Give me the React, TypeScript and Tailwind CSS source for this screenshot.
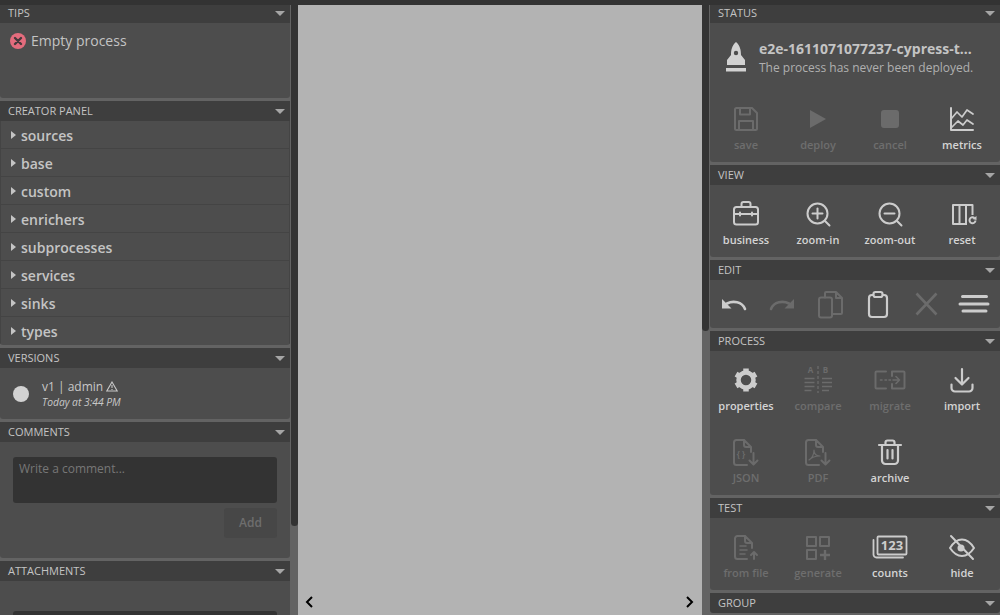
import React from "react";

const ON = "#cccccc";
const OFF = "#6b6b6b";

function Caret() {
  return (
    <svg width="10" height="5" viewBox="0 0 10 5" className="shrink-0">
      <polygon points="0,0 10,0 5,5" fill="#a6a6a6" />
    </svg>
  );
}

function Panel({ title, children }: { title: string; children?: React.ReactNode }) {
  return (
    <section className="mb-[3px] overflow-hidden rounded-b-[3px] bg-[#4d4d4d]">
      <header className="flex h-5 items-center justify-between bg-[#3e3e3e] pl-2 pr-[5px] text-[11px] uppercase leading-5 text-[#c4c4c4]">
        <span>{title}</span>
        <Caret />
      </header>
      {children}
    </section>
  );
}

function Glyph({ color, children }: { color: string; children: React.ReactNode }) {
  return (
    <svg
      width="32"
      height="32"
      viewBox="0 0 32 32"
      fill="none"
      stroke={color}
      strokeWidth="2"
      strokeLinecap="round"
      strokeLinejoin="round"
      className="shrink-0 overflow-visible"
    >
      {children}
    </svg>
  );
}

function Tool({ label, on, children }: { label: string; on?: boolean; children: (c: string) => React.ReactNode }) {
  const color = on ? ON : OFF;
  return (
    <div className="flex h-[72px] w-[72px] flex-col items-center pt-[13px]">
      <Glyph color={color}>{children(color)}</Glyph>
      <span className={`mt-[2px] text-[11px] font-semibold leading-4 ${on ? "text-[#d4d4d4]" : "text-[#6e6e6e]"}`}>{label}</span>
    </div>
  );
}

function EditTool({ on, children }: { on?: boolean; children: (c: string) => React.ReactNode }) {
  return (
    <div className="flex h-12 w-12 items-center justify-center">
      <Glyph color={on ? ON : OFF}>{children(on ? ON : OFF)}</Glyph>
    </div>
  );
}

const Undo = (c: string) => (
  <>
    <path d="M9 15.500C15 12.500 24 13.500 27 21" strokeWidth="2.600" />
    <polygon points="4,11 4,20.500 13.500,20.500" fill={c} stroke="none" />
  </>
);

const Zoom = (minusOnly: boolean) => (
  <>
    <circle cx="15.500" cy="15.500" r="10" />
    <path d="M23 23l4.500 4.500M10.500 15.500h10" />
    {!minusOnly && <path d="M15.500 10.500v10" />}
  </>
);

const Doc = () => (
  <>
    <path d="M14 4H6.500A2.500 2.500 0 0 0 4 6.500v20A2.500 2.500 0 0 0 6.500 29H17" />
    <path d="M14 4l7 7v5M14 4v5a2 2 0 0 0 2 2h5" />
  </>
);

const DownArrow = () => <path d="M23.500 17v11M19.500 24.500l4 4 4-4" />;

const categories = ["sources", "base", "custom", "enrichers", "subprocesses", "services", "sinks", "types"];

export default function App() {
  return (
    <div className="flex h-[615px] w-[1000px] flex-col overflow-hidden bg-[#333333] font-['Open_Sans',sans-serif]">
      <div className="h-[5px] shrink-0 bg-[#333333]" />
      <div className="flex min-h-0 flex-1">
        {/* left column */}
        <aside className="flex w-[298px] shrink-0 bg-[#636363]">
          <div className="w-[290px] shrink-0 overflow-hidden">
            <div className="-mt-[2px]">
              <Panel title="Tips">
                <div className="flex h-[75px] items-start pl-[10px] pt-[8px]">
                  <svg width="16" height="16" viewBox="0 0 16 16" className="mt-[2px] shrink-0">
                    <circle cx="8" cy="8" r="8" fill="#e46c7d" />
                    <path d="M5 5l6 6M11 5l-6 6" stroke="#45393c" strokeWidth="2.400" strokeLinecap="round" />
                  </svg>
                  <span className="ml-[5px] text-sm leading-5 text-[#c4c4c4]">Empty process</span>
                </div>
              </Panel>
              <Panel title="Creator panel">
                <div className="bg-[#444444] px-px">
                  {categories.map((c) => (
                    <div key={c} className="mb-px flex h-[27px] items-center bg-[#4d4d4d] pl-[10px] pt-[3px]">
                      <svg width="5" height="8" viewBox="0 0 5 8" className="-mt-[3px] shrink-0">
                        <polygon points="0,0 5,4 0,8" fill="#c4c4c4" />
                      </svg>
                      <span className="ml-[5px] text-sm font-semibold leading-6 text-[#c4c4c4]">{c}</span>
                    </div>
                  ))}
                </div>
              </Panel>
              <Panel title="Versions">
                <div className="flex h-[51px] items-center pl-[13px]">
                  <span className="h-4 w-4 shrink-0 rounded-full bg-[#d2d2d2]" />
                  <div className="ml-[13px] flex flex-col">
                    <div className="flex items-center text-xs leading-[16px] text-[#c8c8c8]">
                      <span>v1 | admin</span>
                      <svg width="12" height="11" viewBox="0 0 12 11" fill="none" stroke="#c8c8c8" strokeWidth="1.100" className="ml-[3px]">
                        <path d="M6 1L11.200 10H.8z" />
                        <path d="M6 4v3M6 8v1" />
                      </svg>
                    </div>
                    <span className="text-[10.3px] italic leading-[14px] text-[#c8c8c8]">Today at 3:44 PM</span>
                  </div>
                </div>
              </Panel>
              <Panel title="Comments">
                <div className="flex h-[116px] flex-col px-[13px] pt-[15px]">
                  <textarea
                    readOnly
                    placeholder="Write a comment..."
                    className="h-[46px] w-full resize-none rounded-[3px] bg-[#333333] px-[6px] py-[3px] text-xs leading-[18px] outline-none placeholder:text-[#777777]"
                  />
                  <div className="mt-[5px] flex h-[30px] w-[53px] items-center justify-center self-end rounded-[3px] bg-[#474747] text-xs font-semibold text-[#6e6e6e]">
                    Add
                  </div>
                </div>
              </Panel>
              <Panel title="Attachments">
                <div className="px-[13px] pt-[30px]">
                  <div className="h-[46px] rounded-[3px] bg-[#333333]" />
                </div>
              </Panel>
            </div>
          </div>
          <div className="w-2 shrink-0 pl-px">
            <div className="h-[521px] rounded-b-[4px] bg-[#333333]" />
          </div>
        </aside>

        {/* canvas */}
        <main className="flex flex-1 items-end justify-between bg-[#b3b3b3] pb-[7px] pl-[7px] pr-[8px]">
          <svg width="8" height="12" viewBox="0 0 8 12" fill="none" stroke="#000" strokeWidth="2">
            <path d="M7 1L2 6l5 5" />
          </svg>
          <svg width="8" height="12" viewBox="0 0 8 12" fill="none" stroke="#000" strokeWidth="2">
            <path d="M1 1l5 5-5 5" />
          </svg>
        </main>

        {/* right column */}
        <aside className="flex w-[298px] shrink-0 bg-[#636363]">
          <div className="w-2 shrink-0 pr-px">
            <div className="h-[326px] rounded-b-[4px] bg-[#333333]" />
          </div>
          <div className="w-[290px] shrink-0 overflow-hidden">
            <div className="-mt-[2px]">
              <Panel title="Status">
                <div className="flex h-[67px] items-center pl-[10px]">
                  <svg width="32" height="36" viewBox="0 0 32 36" className="-mt-[2px] shrink-0">
                    <path d="M16 4C12 7.500 11 12 11 17L7 22V27H25V22L21 17C21 12 20 7.500 16 4Z" fill="#d2d2d2" />
                    <rect x="6" y="30" width="20" height="3.500" fill="#d2d2d2" />
                    <circle cx="16" cy="15" r="2.200" fill="#4d4d4d" />
                  </svg>
                  <div className="ml-[7px] flex flex-col pt-[3px]">
                    <span className="text-sm font-bold leading-[18px] text-[#c4c4c4]">e2e-1611071077237-cypress-t...</span>
                    <span className="mt-[1px] text-xs leading-[18px] text-[#b0b0b0]">The process has never been deployed.</span>
                  </div>
                </div>
                <div className="flex">
                  <Tool label="save">
                    {() => (
                      <>
                        <path d="M5 6.500A1.500 1.500 0 0 1 6.500 5H22l5 5v15.500a1.500 1.500 0 0 1-1.500 1.500h-19A1.500 1.500 0 0 1 5 25.500z" />
                        <path d="M10 5v6.500h10V5M9 27v-9h14v9" />
                      </>
                    )}
                  </Tool>
                  <Tool label="deploy">{(c) => <polygon points="8,7 24,16 8,25" fill={c} stroke="none" />}</Tool>
                  <Tool label="cancel">{(c) => <rect x="7" y="7" width="18" height="18" rx="3" fill={c} stroke="none" />}</Tool>
                  <Tool label="metrics" on>
                    {() => (
                      <>
                        <path d="M5 5v22h22" />
                        <path d="M5 16l6-7 5 5 5-7 6 4" strokeWidth="1.700" />
                        <path d="M5 25l7-7 5 4 4-5 6 4" strokeWidth="1.700" />
                      </>
                    )}
                  </Tool>
                </div>
              </Panel>
              <Panel title="View">
                <div className="flex">
                  <Tool label="business" on>
                    {() => (
                      <>
                        <rect x="4" y="9" width="24" height="17.500" rx="2.500" />
                        <path d="M11.500 9V6a2 2 0 0 1 2-2h5a2 2 0 0 1 2 2v3M4 16h24M10 14.500v3M22 14.500v3" />
                      </>
                    )}
                  </Tool>
                  <Tool label="zoom-in" on>{() => Zoom(false)}</Tool>
                  <Tool label="zoom-out" on>{() => Zoom(true)}</Tool>
                  <Tool label="reset" on>
                    {(c) => (
                      <>
                        <path d="M26.500 17V7H7v19h14M13.500 7v19M20 7v19" strokeLinecap="butt" />
                        <path d="M29.500 22.500a3 3 0 1 1-1-2.500" strokeWidth="2" strokeLinecap="butt" />
                        <polygon points="30.500,18 30.500,22 26.500,21" fill={c} stroke="none" />
                      </>
                    )}
                  </Tool>
                </div>
              </Panel>
              <Panel title="Edit">
                <div className="flex">
                  <EditTool on>{Undo}</EditTool>
                  <EditTool>{(c) => <g transform="matrix(-1 0 0 1 32 0)">{Undo(c)}</g>}</EditTool>
                  <EditTool>
                    {() => (
                      <>
                        <rect x="5" y="9.500" width="13" height="20" rx="2" />
                        <path d="M11 9.500V5a1 1 0 0 1 1-1h10l6 6v15a1 1 0 0 1-1 1h-9M22 4v6h6" />
                      </>
                    )}
                  </EditTool>
                  <EditTool on>
                    {() => (
                      <>
                        <rect x="7" y="7" width="18" height="22" rx="3" strokeWidth="2.200" />
                        <rect x="11.500" y="4" width="9" height="5" rx="2" fill="#4d4d4d" strokeWidth="2.200" />
                      </>
                    )}
                  </EditTool>
                  <EditTool>{() => <path d="M6.500 5.500l20 21M26.500 5.500l-20 21" strokeWidth="2.600" strokeLinecap="butt" />}</EditTool>
                  <EditTool on>{() => <path d="M4.500 8.500h24M2 16h28M5 23h23" strokeWidth="3" />}</EditTool>
                </div>
              </Panel>
              <Panel title="Process">
                <div className="grid grid-cols-[repeat(4,72px)]">
                  <Tool label="properties" on>
                    {() => (
                      <>
                        <circle cx="16" cy="16" r="7.500" strokeWidth="4.500" />
                        <g strokeWidth="5.500" strokeLinecap="butt">
                          <path d="M16 4.500v4M16 23.500v4" />
                          <path d="M6 10.200l3.500 2M22.500 19.800l3.500 2" />
                          <path d="M26 10.200l-3.500 2M9.500 19.800l-3.500 2" />
                        </g>
                      </>
                    )}
                  </Tool>
                  <Tool label="compare">
                    {(c) => (
                      <>
                        <text x="8.500" y="9" fontSize="8" fontWeight="700" fill={c} stroke="none" textAnchor="middle">A</text>
                        <text x="23.500" y="9" fontSize="8" fontWeight="700" fill={c} stroke="none" textAnchor="middle">B</text>
                        <path d="M16 2v27" strokeDasharray="3 2" strokeWidth="1.300" strokeLinecap="butt" />
                        <path d="M2.500 14.500h10M2.500 18.500h10M2.500 22.500h10M2.500 26.500h7M20 14.500h10M20 18.500h10M20 22.500h10M20 26.500h7" strokeWidth="1.400" strokeLinecap="butt" />
                      </>
                    )}
                  </Tool>
                  <Tool label="migrate">
                    {() => (
                      <>
                        <path d="M12 7.500H2.500a1 1 0 0 0-1 1v15a1 1 0 0 0 1 1H12" />
                        <path d="M18 12V7.500h11.500a1 1 0 0 1 1 1v15a1 1 0 0 1-1 1H18V20" />
                        <path d="M6.500 16h1.500M11 16h1.500M15 16h1.500M19 16h6.500M22 12.500l3.500 3.500-3.500 3.500" strokeWidth="1.600" />
                      </>
                    )}
                  </Tool>
                  <Tool label="import" on>
                    {() => <path d="M16 5v15M9.500 14l6.500 6.500 6.500-6.500M5.500 20.500v3.500a3.500 3.500 0 0 0 3.500 3.500h14a3.500 3.500 0 0 0 3.500-3.500v-3.500" strokeWidth="2.200" />}
                  </Tool>
                  <Tool label="JSON">
                    {(c) => (
                      <>
                        {Doc()}
                        {DownArrow()}
                        <text x="11" y="21" fontSize="8" fontWeight="700" fill={c} stroke="none" textAnchor="middle">{"{ }"}</text>
                      </>
                    )}
                  </Tool>
                  <Tool label="PDF">
                    {() => (
                      <>
                        {Doc()}
                        {DownArrow()}
                        <path d="M7 24c3-2 5-6 5-10 0 4 2 6 6 6-4 0-8 1-11 4z" strokeWidth="1.200" />
                      </>
                    )}
                  </Tool>
                  <Tool label="archive" on>
                    {() => (
                      <>
                        <path d="M5 9h22M11.500 9V6.500a2 2 0 0 1 2-2h5a2 2 0 0 1 2 2V9M8 9v15.500a3.500 3.500 0 0 0 3.500 3.500h9a3.500 3.500 0 0 0 3.500-3.500V9" strokeWidth="2.200" />
                        <path d="M13.500 14v8.500M18.500 14v8.500" strokeWidth="2.200" />
                      </>
                    )}
                  </Tool>
                </div>
              </Panel>
              <Panel title="Test">
                <div className="flex">
                  <Tool label="from file">
                    {() => (
                      <>
                        <path d="M15 5H7.500A2.500 2.500 0 0 0 5 7.500v18A2.500 2.500 0 0 0 7.500 28H17" />
                        <path d="M15 5l7 7v5M15 5v5a2 2 0 0 0 2 2h5" />
                        <path d="M10 15h6M10 19h7M10 23h5" strokeWidth="1.600" />
                        <path d="M24 28v-7M21 24l3-3 3 3" strokeWidth="2" />
                      </>
                    )}
                  </Tool>
                  <Tool label="generate">
                    {() => (
                      <>
                        <rect x="5" y="6" width="9" height="9" />
                        <rect x="18" y="6" width="9" height="9" />
                        <rect x="5" y="19" width="9" height="9" />
                        <path d="M23 19v10M18 24h10" strokeWidth="2.400" strokeLinecap="butt" />
                      </>
                    )}
                  </Tool>
                  <Tool label="counts" on>
                    {(c) => (
                      <>
                        <rect x="3.500" y="5.500" width="29" height="18" rx="1" strokeWidth="1.800" />
                        <path d="M-.5 9v14.500a3 3 0 0 0 3 3H29" strokeWidth="1.800" />
                        <text x="18" y="19" fontSize="13" fontWeight="700" fill={c} stroke="none" textAnchor="middle">123</text>
                      </>
                    )}
                  </Tool>
                  <Tool label="hide" on>
                    {(c) => (
                      <>
                        <path d="M4 17c4-6.500 8-8.500 12-8.500s8 2 12 8.500c-4 6-8 8-12 8s-8-2-12-8z" />
                        <circle cx="15" cy="17" r="3.500" fill={c} stroke="none" />
                        <path d="M5 5l22 23" strokeWidth="2" />
                      </>
                    )}
                  </Tool>
                </div>
              </Panel>
              <Panel title="Group" />
            </div>
          </div>
        </aside>
      </div>
    </div>
  );
}
